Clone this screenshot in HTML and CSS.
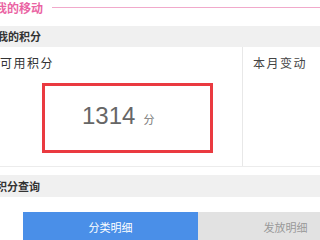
FILE: index.html
```html
<!DOCTYPE html>
<html lang="zh-CN">
<head>
<meta charset="utf-8">
<link rel="stylesheet" href="styles.css">
</head>
<body>
<div class="page">
  <div class="header">
    <span class="title">我的移动</span>
    <span class="rule"></span>
  </div>
  <div class="bar">我的积分</div>
  <div class="points">
    <div class="avail">
      <div class="label">可用积分</div>
      <div class="box">
        <span class="num">1314</span><span class="unit">分</span>
      </div>
    </div>
    <div class="month">
      <div class="label">本月变动</div>
    </div>
  </div>
  <div class="bar bar2">积分查询</div>
  <div class="tabs">
    <div class="tab active">分类明细</div>
    <div class="tab">发放明细</div>
  </div>
</div>
</body>
</html>
```
FILE: styles.css
```css
html, body {
  margin: 0;
  padding: 0;
  background: #ffffff;
}
body {
  width: 320px;
  height: 240px;
  overflow: hidden;
  font-family: "Liberation Sans", "Noto Sans CJK SC", sans-serif;
}
.page {
  width: 320px;
  overflow: hidden;
}
.header {
  display: flex;
  align-items: center;
  height: 15px;
  margin-bottom: 11px;
}
.title {
  font-family: "Noto Sans CJK SC", sans-serif;
  font-size: 12px;
  font-weight: 700;
  color: #ea63a3;
  line-height: 15px;
  margin-left: -5px;
  margin-right: 9px;
  white-space: nowrap;
}
.rule {
  flex: 1;
  height: 1px;
  background: #f1a9cb;
}
.bar {
  height: 21px;
  line-height: 21px;
  background: #f0f0f0;
  font-family: "Noto Sans CJK SC", sans-serif;
  font-size: 11px;
  font-weight: 700;
  color: #333333;
  text-indent: -3px;
  white-space: nowrap;
}
.bar2 {
  height: 22px;
  line-height: 22px;
  margin-top: 8px;
  text-indent: -4px;
}
.points {
  display: flex;
  height: 119px;
  border-bottom: 1px solid #ececec;
}
.avail {
  width: 243px;
  border-right: 1px solid #e8e8e8;
  padding-top: 8px;
  box-sizing: border-box;
}
.month {
  flex: 1;
  padding-top: 8px;
  padding-left: 10px;
}
.label {
  font-family: "Noto Sans CJK SC", sans-serif;
  font-size: 12px;
  letter-spacing: 1.5px;
  color: #333333;
  line-height: 16px;
  white-space: nowrap;
}
.month .label {
  color: #444444;
}
.box {
  margin-top: 12px;
  margin-left: 42px;
  width: 171px;
  height: 70px;
  box-sizing: border-box;
  border: 3px solid #ea3a40;
  display: flex;
  align-items: baseline;
  padding-left: 37px;
  padding-top: 15px;
}
.num {
  font-family: "Liberation Sans", sans-serif;
  font-size: 24px;
  line-height: 30px;
  color: #666666;
}
.unit {
  font-family: "Noto Sans CJK SC", sans-serif;
  font-size: 11px;
  color: #777777;
  margin-left: 8px;
}
.tabs {
  display: flex;
  width: 350px;
  margin-top: 15px;
  margin-left: 23px;
}
.tab {
  width: 175px;
  flex: none;
  height: 30px;
  line-height: 30px;
  text-align: center;
  font-family: "Noto Sans CJK SC", sans-serif;
  font-size: 11px;
  background: #e2e2e2;
  color: #999999;
}
.tab.active {
  background: #4a8fe8;
  color: #ffffff;
}
```
